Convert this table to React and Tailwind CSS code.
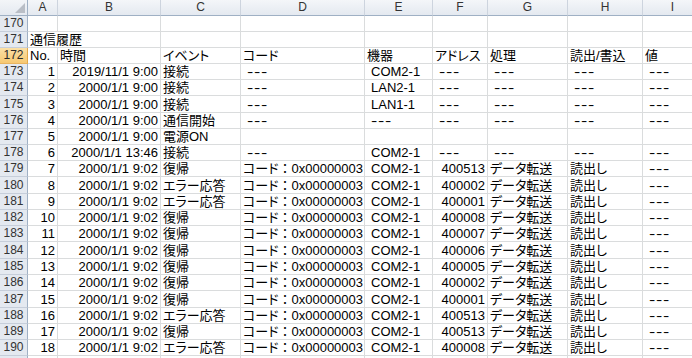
import React from "react";

const W = [
  "w-[30px]",
  "w-[103px]",
  "w-[80px]",
  "w-[124px]",
  "w-[68px]",
  "w-[55px]",
  "w-[80px]",
  "w-[75px]",
  "w-[60px]",
];
const LETTERS = ["A", "B", "C", "D", "E", "F", "G", "H", "I"];

// cell helpers
const num = (t) => ({ t, r: true });
const txt = (t) => ({ t });
const sp = (t) => ({ t, s: true });
const dash = { t: "---", s: true, d: true };
const ov = (t) => ({ t, o: true });
const code = { t: "0x00000003", code: true };

const cmd = (n, date, ev, addr, op = "データ転送", rw = "読出し") => [
  num(n),
  num(date),
  txt(ev),
  code,
  sp("COM2-1"),
  num(addr),
  txt(op),
  txt(rw),
  dash,
];

const ROWS = [
  { n: 170, cells: [] },
  { n: 171, cells: [ov("通信履歴")] },
  {
    n: 172,
    sel: true,
    cells: ["No.", "時間", "イベント", "コード", "機器", "アドレス", "処理", "読出/書込", "値"].map(txt),
  },
  { n: 173, cells: [num("1"), num("2019/11/1 9:00"), txt("接続"), dash, sp("COM2-1"), dash, dash, dash, dash] },
  { n: 174, cells: [num("2"), num("2000/1/1 9:00"), txt("接続"), dash, sp("LAN2-1"), dash, dash, dash, dash] },
  { n: 175, tall: true, cells: [num("3"), num("2000/1/1 9:00"), txt("接続"), dash, sp("LAN1-1"), dash, dash, dash, dash] },
  { n: 176, cells: [num("4"), num("2000/1/1 9:00"), txt("通信開始"), dash, dash, dash, dash, dash, dash] },
  { n: 177, cells: [num("5"), num("2000/1/1 9:00"), txt("電源ON")] },
  { n: 178, cells: [num("6"), num("2000/1/1 13:46"), txt("接続"), dash, sp("COM2-1"), dash, dash, dash, dash] },
  { n: 179, cells: cmd("7", "2000/1/1 9:02", "復帰", "400513") },
  { n: 180, tall: true, cells: cmd("8", "2000/1/1 9:02", "エラー応答", "400002") },
  { n: 181, cells: cmd("9", "2000/1/1 9:02", "エラー応答", "400001") },
  { n: 182, cells: cmd("10", "2000/1/1 9:02", "復帰", "400008") },
  { n: 183, cells: cmd("11", "2000/1/1 9:02", "復帰", "400007") },
  { n: 184, tall: true, cells: cmd("12", "2000/1/1 9:02", "復帰", "400006") },
  { n: 185, cells: cmd("13", "2000/1/1 9:02", "復帰", "400005") },
  { n: 186, cells: cmd("14", "2000/1/1 9:02", "復帰", "400002") },
  { n: 187, tall: true, cells: cmd("15", "2000/1/1 9:02", "復帰", "400001") },
  { n: 188, cells: cmd("16", "2000/1/1 9:02", "エラー応答", "400513") },
  { n: 189, cells: cmd("17", "2000/1/1 9:02", "復帰", "400513") },
  { n: 190, cells: cmd("18", "2000/1/1 9:02", "エラー応答", "400008") },
  { n: 191, hideNum: true, cells: [] },
];

function Content({ c }) {
  if (!c) return null;
  if (c.d)
    return <span className="inline-block origin-left scale-x-[1.45] tracking-[0.5px]">{c.t}</span>;
  if (c.code)
    return (
      <span>
        コード<span className="[font-feature-settings:normal]">：</span>
        {c.t}
      </span>
    );
  return <span>{c.t}</span>;
}

function Cell({ w, c }) {
  const border = c && c.o ? "border-b border-[#dadcdd]" : "border-b border-r border-[#dadcdd]";
  const align = c && c.r ? "justify-end pr-[2px]" : c && c.s ? "justify-start pl-[6px]" : "justify-start pl-[2px]";
  return (
    <div className={`${w} shrink-0 h-full flex items-center whitespace-nowrap ${border} ${align}`}>
      <Content c={c} />
    </div>
  );
}

function RowHeader({ n, sel, hide }) {
  return (
    <div
      className={
        sel
          ? "w-[28px] shrink-0 h-full flex items-center justify-center text-[12px] text-[#2a2a2a] bg-[linear-gradient(#fbe0a6,#f6c872)] border-r border-b border-r-[#e2a84a] border-b-[#e8b460]"
          : "w-[28px] shrink-0 h-full flex items-center justify-center text-[12px] text-[#333] bg-[#e4e9f0] border-r border-b border-r-[#9fb0c4] border-b-[#c6ceda]"
      }
    >
      {hide ? "" : n}
    </div>
  );
}

export default function App() {
  return (
    <div className="w-[692px] h-[358px] overflow-hidden bg-white text-black text-[13px] leading-[15px] font-['Liberation_Sans','Noto_Sans_CJK_JP',sans-serif] [font-feature-settings:'palt']">
      {/* column header row */}
      <div className="flex h-[16px]">
        <div className="w-[28px] shrink-0 h-full relative bg-[linear-gradient(#f3f5f8,#e4e9f0)] border-r border-b border-r-[#9fb0c4] border-b-[#9fb0c4]">
          <svg className="absolute left-0 top-0" width="27" height="15" viewBox="0 0 27 15">
            <polygon points="25,3 25,13 15,13" fill="#b9bec6" />
          </svg>
        </div>
        {LETTERS.map((l, i) => (
          <div
            key={l}
            className={`${W[i]} shrink-0 h-full flex items-center justify-center text-[12px] text-[#333] bg-[linear-gradient(#f4f6f9,#e4e9f0)] border-r border-b border-r-[#cdd4de] border-b-[#9fb0c4]`}
          >
            {l}
          </div>
        ))}
      </div>
      {ROWS.map((row) => (
        <div key={row.n} className={row.tall ? "flex h-[17px]" : "flex h-[16px]"}>
          <RowHeader n={row.n} sel={row.sel} hide={row.hideNum} />
          {W.map((w, i) => (
            <Cell key={i} w={w} c={row.cells[i]} />
          ))}
        </div>
      ))}
    </div>
  );
}
